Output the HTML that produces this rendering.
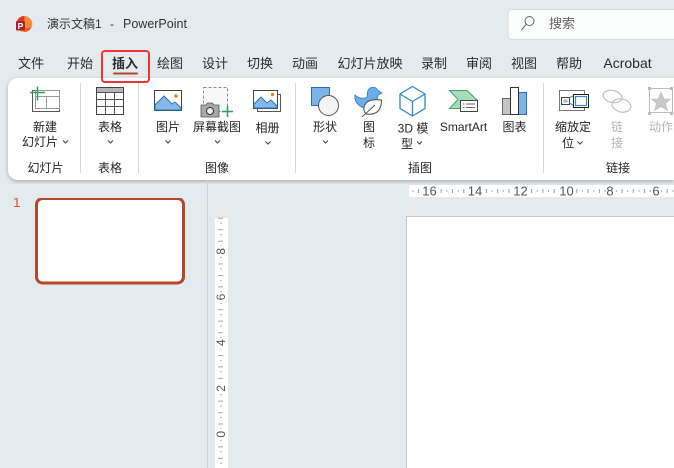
<!DOCTYPE html>
<html><head><meta charset="utf-8"><style>
html,body{margin:0;padding:0;width:674px;height:468px;overflow:hidden;background:#e3ebee}
svg{position:absolute;left:0;top:0;font-family:"Liberation Sans","Noto Sans CJK SC",sans-serif}
.t{font-size:13px;fill:#2b2b2b;text-anchor:middle}
.l{font-size:12px;fill:#262626;text-anchor:middle}
.g{font-size:12px;fill:#b4b4b4;text-anchor:middle}
.n{font-size:13px;fill:#555;text-anchor:middle}
.c{fill:none;stroke:#444;stroke-width:1}
</style></head><body>
<svg width="674" height="468" viewBox="0 0 674 468" xmlns="http://www.w3.org/2000/svg">
<defs><filter id="s" x="-2%" y="-10%" width="104%" height="125%"><feDropShadow dx="0" dy="1.500" stdDeviation="2" flood-color="#000" flood-opacity=".28"/></filter></defs>

<!-- title bar -->
<circle cx="24.300" cy="24" r="8" fill="#f58a3a"/>
<path d="M24.300 16a8 8 0 0 0-7.500 5.500h7.500z" fill="#d83b2a"/>
<path d="M24.300 32a8 8 0 0 0 7-4.500h-7z" fill="#e0602f"/>
<rect x="16" y="21" width="9" height="9.500" rx="1" fill="#b3202c"/>
<text x="20.500" y="29" font-size="8.500" font-weight="bold" fill="#fff" text-anchor="middle">P</text>
<text x="47" y="28" font-size="12" fill="#333">演示文稿1</text>
<text x="110" y="28" font-size="12" fill="#333">-</text>
<text x="123" y="28" font-size="12.500" fill="#333">PowerPoint</text>

<!-- search -->
<rect x="508" y="9.500" width="180" height="30" rx="4" fill="#fbfcfc" stroke="#d8dcde"/>
<circle cx="529.500" cy="21" r="4.500" fill="none" stroke="#666"/>
<path d="M526 24.500l-4.500 5.500" stroke="#666" fill="none"/>
<text x="549" y="28" font-size="13" fill="#666">搜索</text>

<!-- ribbon -->
<path d="M674 78H18a10 10 0 0 0-10 10v82a10 10 0 0 0 10 10h656z" fill="#fff" filter="url(#s)"/>

<!-- tabs -->
<text class="t" x="31" y="68">文件</text>
<text class="t" x="80" y="68">开始</text>
<text class="t" x="125" y="68" font-weight="bold">插入</text>
<text class="t" x="170" y="68">绘图</text>
<text class="t" x="215" y="68">设计</text>
<text class="t" x="260" y="68">切换</text>
<text class="t" x="305" y="68">动画</text>
<text class="t" x="370" y="68">幻灯片放映</text>
<text class="t" x="434" y="68">录制</text>
<text class="t" x="479" y="68">审阅</text>
<text class="t" x="524" y="68">视图</text>
<text class="t" x="569" y="68">帮助</text>
<text class="t" x="627.500" y="68" font-size="14" style="font-size:14px">Acrobat</text>
<rect x="113" y="72.500" width="25" height="2" rx="1" fill="#b7472a"/>
<rect x="102" y="51" width="47" height="31" rx="3" fill="none" stroke="#ef3434" stroke-width="2"/>

<!-- separators -->
<path d="M80.500 83v90M138.500 83v90M295.500 83v90M543.500 83v90" stroke="#d5d5d5"/>

<!-- new slide -->
<rect x="32.500" y="90.500" width="27" height="21" fill="#fff" stroke="#555"/>
<rect x="35.500" y="90.500" width="24" height="18" fill="none" stroke="#999"/>
<path d="M35.500 96.500h24M46.500 96.500v12" stroke="#999" fill="none"/>
<path d="M37.500 86.500v14M30 92.500h15" stroke="#2f9e5f" stroke-width="1.500" fill="none"/>
<!-- table -->
<rect x="96.500" y="87.500" width="27" height="27" fill="#fff" stroke="#444"/>
<rect x="97" y="88" width="26" height="4" fill="#b5b5b5"/>
<path d="M97 92.500h26M105.500 92v22M114.500 92v22M97 99.500h26M97 106.500h26" stroke="#555" fill="none"/>
<!-- picture -->
<rect x="154.500" y="90.500" width="27" height="20" fill="#fff" stroke="#444"/>
<path d="M155 110V105l9-9 8 8 3-2 6 6v2z" fill="#82b9e8" stroke="#2a76b8"/>
<circle cx="176" cy="96" r="1.800" fill="#e8821e"/>
<!-- screenshot -->
<rect x="203.500" y="87.500" width="24" height="24" fill="#f8f8f8" stroke="#888" stroke-dasharray="3 2"/>
<path d="M201 105h5l1.500-2h5l1.500 2h5v12h-18z" fill="#a8a8a8" stroke="#555" stroke-width=".8"/>
<circle cx="210" cy="111" r="3.500" fill="#eee" stroke="#333"/>
<path d="M227.500 106v11M222 111.500h11" stroke="#2f9e5f" stroke-width="1.500" fill="none"/>
<!-- album -->
<path d="M257.500 108.500v3h23v-17h-3" fill="none" stroke="#555"/>
<rect x="253.500" y="90.500" width="24" height="18" fill="#fff" stroke="#444"/>
<path d="M254 108v-4l7-7 6 6 4-3 6 6v2z" fill="#82b9e8" stroke="#2a76b8"/>
<circle cx="272.500" cy="94.500" r="1.600" fill="#e8821e"/>
<!-- shapes -->
<rect x="311.500" y="87.500" width="18" height="18" fill="#7ab3e6" stroke="#2a6db0"/>
<circle cx="328.500" cy="105.500" r="10" fill="#f4f4f4" stroke="#555"/>
<!-- icons -->
<path d="M355 95c3 3 7 4 12 2.500l.5-5a5.500 5.500 0 0 1 10.500-2l4 2.500-4 2c0 3-1 4.500-2 6l-12 7c-6-2-10-7-9-13z" fill="#6aade8" stroke="#2a7cc6" stroke-width=".8"/>
<path d="M381.500 100c-8-1-15 0-17 5.500-1.500 4 0 7.500 2 8.500 6 1 11-1 13-5 1.500-2.500 2-6 2-9z" fill="#fff" stroke="#555" stroke-width="1.100"/>
<path d="M362 117l13-12" stroke="#555" fill="none"/>
<!-- 3D -->
<path d="M412.500 86.500l12.500 7.500v14.500l-12.500 7.500-12.500-7.500v-14.500zM400 94l12.500 7.500 12.500-7.500M412.500 101.500v14.500" fill="#fff" stroke="#2d8ad0" stroke-width="1.300" stroke-linejoin="round"/>
<!-- smartart -->
<path d="M449.500 90.500h17.500l10 9.500-10 8.500h-17.500l8.500-9z" fill="#a6dcb8" stroke="#3fa66b"/>
<rect x="460.500" y="100.500" width="17" height="11" fill="#fff" stroke="#444"/>
<path d="M463 104h1.500M466 104h9M463 107.500h1.500M466 107.500h9" stroke="#666" fill="none"/>
<!-- chart -->
<rect x="502.500" y="98.500" width="8" height="16" fill="#c4c4c4" stroke="#666"/>
<rect x="518.500" y="92.500" width="8" height="22" fill="#7ab3e6" stroke="#2a6db0"/>
<rect x="510.500" y="87.500" width="8" height="27" fill="#fff" stroke="#333"/>
<!-- zoom -->
<rect x="559.500" y="90.500" width="25" height="20" fill="#fff" stroke="#777"/>
<path d="M570 97.500l4-2M570 103.500l4 2" stroke="#777"/>
<rect x="561.500" y="97.500" width="8" height="7" fill="#fff" stroke="#444"/>
<rect x="563.500" y="99.500" width="4" height="3" fill="#8cc0ea"/>
<rect x="573.500" y="94.500" width="15" height="13" fill="#fff" stroke="#222"/>
<rect x="575.500" y="96.500" width="11" height="9" fill="#fff" stroke="#2f8bd6" stroke-width="1.200"/>
<!-- link -->
<ellipse cx="612.500" cy="96.500" rx="9.500" ry="6" fill="none" stroke="#c6c6c6" stroke-width="1.300" transform="rotate(12 612.500 96.500)"/>
<ellipse cx="621.500" cy="105.500" rx="9.500" ry="6.500" fill="#fff" fill-opacity="0" stroke="#c6c6c6" stroke-width="1.300" transform="rotate(12 621.500 105.500)"/>
<!-- action -->
<rect x="649.500" y="88.500" width="23" height="24" fill="#fff" stroke="#bbb"/>
<path d="M648 87h3v3h-3zM670 87h3v3h-3zM648 112h3v3h-3zM670 112h3v3h-3z" fill="#bbb"/>
<path d="M661 92l3 7h6.500l-5 4.500 2 7-6.500-4-6.500 4 2-7-5-4.500H658z" fill="#c9c9c9" stroke="#bbb" stroke-width=".6"/>

<!-- ribbon labels -->
<text class="l" x="45" y="131">新建</text>
<text class="l" x="40" y="146">幻灯片</text>
<text class="l" x="110" y="131">表格</text>
<text class="l" x="168" y="131">图片</text>
<text class="l" x="217" y="131">屏幕截图</text>
<text class="l" x="267.500" y="132">相册</text>
<text class="l" x="325" y="131">形状</text>
<text class="l" x="369" y="131">图</text>
<text class="l" x="369" y="147">标</text>
<text class="l" x="413" y="132.500">3D 模</text>
<text class="l" x="407" y="148">型</text>
<text class="l" x="463.500" y="131">SmartArt</text>
<text class="l" x="514.500" y="131">图表</text>
<text class="l" x="573" y="131">缩放定</text>
<text class="l" x="568" y="147">位</text>
<text class="g" x="617" y="131">链</text>
<text class="g" x="617" y="147">接</text>
<text class="g" x="661" y="131">动作</text>
<text class="l" x="45.500" y="172">幻灯片</text>
<text class="l" x="110" y="172">表格</text>
<text class="l" x="217" y="172">图像</text>
<text class="l" x="420" y="172">插图</text>
<text class="l" x="618" y="172">链接</text>
<!-- chevrons -->
<path class="c" d="M63 140.500l2.500 2.500 2.500-2.500M108 140.500l2.500 2.500 2.500-2.500M165.500 140.500l2.500 2.500 2.500-2.500M215 140.500l2.500 2.500 2.500-2.500M265.500 141.500l2.500 2.500 2.500-2.500M323 140.500l2.500 2.500 2.500-2.500M417 141.500l2.500 2.500 2.500-2.500M577.500 141.500l2.500 2.500 2.500-2.500"/>

<!-- left pane -->
<rect x="207" y="180" width="1" height="288" fill="#cfd3d5"/>
<text x="13" y="207" font-size="13.500" fill="#d35230">1</text>
<rect x="36.500" y="198.500" width="147" height="84.500" rx="6" fill="#fff" stroke="#b7472a" stroke-width="3"/>

<!-- horizontal ruler -->
<rect x="409" y="185" width="265" height="13" fill="#fff"/>
<path d="M409 197.500h265" stroke="#e7e9ea"/>
<line x1="0" x2="674" y1="191" y2="191" stroke="#9a9a9a" stroke-width="4" stroke-dasharray="1 10.300"/>
<line x1="0" x2="674" y1="191" y2="191" stroke="#b0b0b0" stroke-width="2" stroke-dasharray="1 10.300" stroke-dashoffset="-5.650"/>
<rect x="0" y="184" width="409" height="14" fill="#e3ebee"/>
<rect x="207" y="184" width="1" height="14" fill="#cfd3d5"/>
<g fill="#fff"><rect x="422" y="186" width="15" height="11"/><rect x="468" y="186" width="15" height="11"/><rect x="513" y="186" width="15" height="11"/><rect x="559" y="186" width="15" height="11"/><rect x="606" y="186" width="8" height="11"/><rect x="652" y="186" width="8" height="11"/></g>
<text class="n" x="429.500" y="195.500">16</text>
<text class="n" x="475" y="195.500">14</text>
<text class="n" x="520.500" y="195.500">12</text>
<text class="n" x="566.500" y="195.500">10</text>
<text class="n" x="610" y="195.500">8</text>
<text class="n" x="656" y="195.500">6</text>

<!-- vertical ruler -->
<rect x="214.500" y="217.500" width="14" height="252" fill="#fff" stroke="#e7e9ea"/>
<line x1="220.500" x2="220.500" y1="217.800" y2="468" stroke="#a8a8a8" stroke-width="5" stroke-dasharray="1 10.430"/>
<line x1="221" x2="221" y1="222.700" y2="468" stroke="#b4b4b4" stroke-width="2" stroke-dasharray="1 10.430"/>
<g fill="#fff"><rect x="215" y="246" width="13" height="11"/><rect x="215" y="292" width="13" height="11"/><rect x="215" y="338" width="13" height="11"/><rect x="215" y="383" width="13" height="11"/><rect x="215" y="429" width="13" height="11"/></g>
<text class="n" transform="translate(225 251.300) rotate(-90)" style="font-size:12px">8</text>
<text class="n" transform="translate(225 297) rotate(-90)" style="font-size:12px">6</text>
<text class="n" transform="translate(225 342.700) rotate(-90)" style="font-size:12px">4</text>
<text class="n" transform="translate(225 388.400) rotate(-90)" style="font-size:12px">2</text>
<text class="n" transform="translate(225 434.300) rotate(-90)" style="font-size:12px">0</text>

<!-- slide -->
<rect x="406.500" y="216.500" width="280" height="270" fill="#fff" stroke="#c4c6c8"/>
</svg>
</body></html>
